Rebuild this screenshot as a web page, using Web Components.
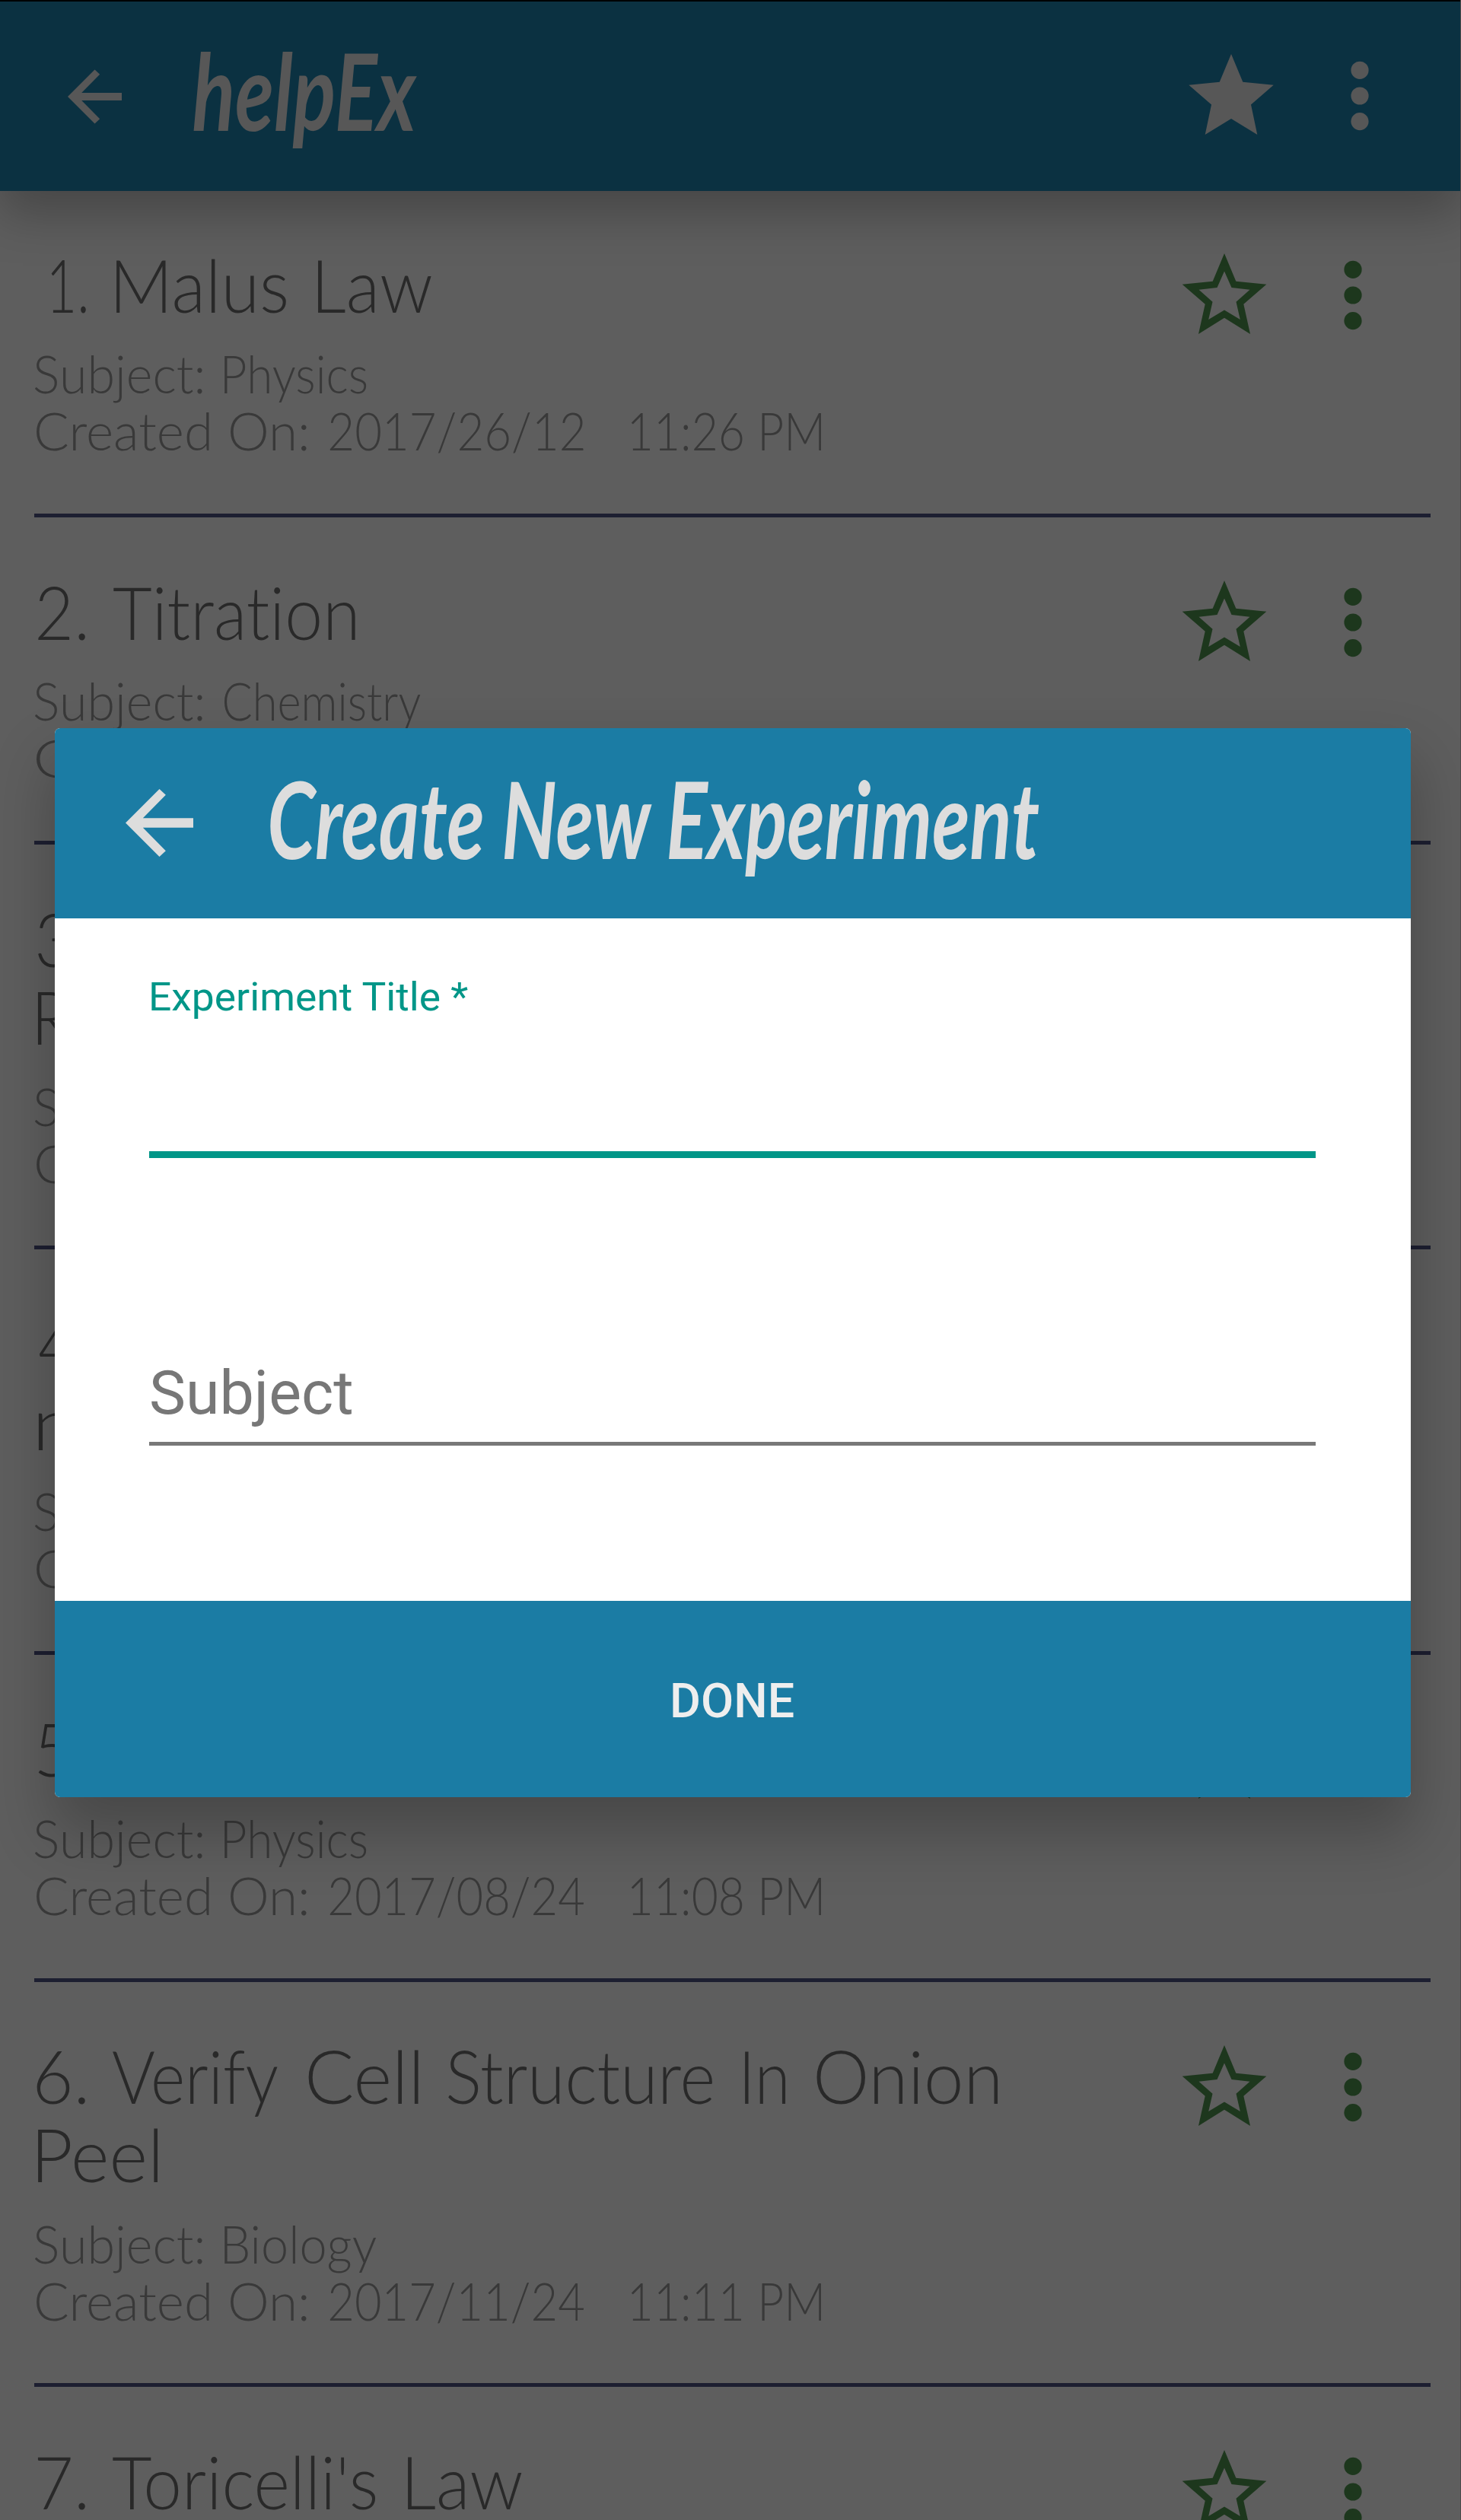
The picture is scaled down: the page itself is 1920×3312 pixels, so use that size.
<!DOCTYPE html>
<html lang="en">
<head>
<meta charset="utf-8">
<title>helpEx</title>
<style>
html,body{margin:0;padding:0}
body{width:1920px;height:3312px;overflow:hidden;background:#5e5e5e;font-family:Lato,"Liberation Sans",sans-serif}
</style>
</head>
<body>
<help-app></help-app>
<script>
const define=(name,html,setup)=>{
  const t=document.createElement('template');t.innerHTML=html;
  customElements.define(name,class extends HTMLElement{
    connectedCallback(){
      if(this.shadowRoot)return;
      this.attachShadow({mode:'open'}).append(t.content.cloneNode(true));
      if(setup)setup(this,this.shadowRoot);
    }
  });
};

/* One line of text whose ink is stretched to the width given in "w". */
define('fit-text',`<style>
:host{display:block;white-space:pre;flex:none}
span{display:block;width:max-content;transform-origin:0 50%;letter-spacing:.01px;font-variant-ligatures:none}
</style><span><slot></slot></span>`,(el,root)=>{
  const cs=getComputedStyle(el),ctx=document.createElement('canvas').getContext('2d');
  ctx.font=`${cs.fontStyle} ${cs.fontWeight} ${cs.fontSize} ${cs.fontFamily}`;
  ctx.letterSpacing='0.01px';
  const m=ctx.measureText(el.textContent),w=+el.getAttribute('w');
  const ink=m.actualBoundingBoxLeft+m.actualBoundingBoxRight,s=w/ink;
  el.style.width=w+'px';
  root.querySelector('span').style.transform=`translateX(${m.actualBoundingBoxLeft*s}px) scaleX(${s})`;
});

define('back-arrow',`<style>
:host{display:block;flex:none}svg{display:block;width:100%;height:100%}
</style><svg viewBox="4 4 16 16" fill="currentColor"><path d="M20 10.87H8.1l5.4-5.46L12 4l-8 8 8 8 1.5-1.41L8.1 13.13H20z"/></svg>`);

define('star-icon',`<style>
:host{display:block;width:112px;height:106px;flex:none}svg{display:block}
</style><svg width="112" height="106" viewBox="0 0 112 106" fill="currentColor" fill-rule="evenodd">
<path d="M56 0L71.3 36.7L111.3 40.7L81.3 66.7L90 106L56 84.7L22 106L30.7 66.7L.7 40.7L40.7 36.7ZM56 23.5L46.5 45L22.5 47.7L40.5 63.7L35.2 87L56 74.5L76.8 87L71.5 63.7L89.5 47.7L65.5 45Z"/>
</svg>`,(el,root)=>{
  if(el.hasAttribute('filled'))
    root.querySelector('path').setAttribute('d','M56 0L71.3 36.7L111.7 40.7L82 66.5L90.3 106L56 85L21.7 106L30 66.5L.3 40.7L40.7 36.7Z');
});

define('more-icon',`<style>:host{display:block;flex:none}svg{display:block}</style>
<svg width="24" height="92" viewBox="0 0 24 92" fill="currentColor"><circle cx="12" cy="12.3" r="11.6"/><circle cx="12" cy="46" r="11.6"/><circle cx="12" cy="79.6" r="11.6"/></svg>`);

define('app-bar',`<style>
:host{display:flex;align-items:center;box-sizing:border-box;height:251px;padding-left:89px;border-top:2px solid #000;
background:#0b3141;color:#575757;box-shadow:0 30px 60px rgba(0,0,0,.25);position:relative}
back-arrow{width:71px;height:72px}
.name{margin:0 0 0 94px;font-style:italic;font-weight:700;font-size:140px;line-height:160px;padding-bottom:18px}
.gap{flex:1}
star-icon{margin-bottom:6px}
more-icon{margin:0 121px 2px 101px}
</style><back-arrow></back-arrow><div class="name"><fit-text w="294">helpEx</fit-text></div><div class="gap"></div><star-icon filled></star-icon><more-icon></more-icon>`);

define('experiment-row',`<style>
:host{display:flex;box-sizing:border-box;margin:0 40px 0 45px;border-bottom:5px solid #1d1f31;padding:72.6px 0 71.9px;color:#292929;font-weight:300}
.text{flex:1}
.line{display:flex}
.title{font-size:96px;line-height:102.6px}
.title .line{height:102.6px}
.meta{margin-top:28px;font-size:69px;line-height:75px;color:#393939}
.meta .line{height:75px}
.meta .line+.line{height:74.8px}
.actions{display:flex;padding-top:10.5px;color:#1d371d;align-items:flex-start}
more-icon{margin:9px 90px 0 101px}
</style><div class="text"><div class="title"></div><div class="meta"></div></div><div class="actions"><star-icon></star-icon><more-icon></more-icon></div>`,(el,root)=>{
  const put=(sel,lines)=>lines.forEach(parts=>{
    const line=document.createElement('div');line.className='line';
    root.querySelector(sel).append(line);
    let end=45;
    for(const [from,to,s] of parts){
      const f=document.createElement('fit-text');
      f.setAttribute('w',to-from);f.style.marginLeft=(from-end)+'px';f.textContent=s;
      line.append(f);end=to;
    }
  });
  put('.title',el.data.title);put('.meta',el.data.meta);
});

define('text-field',`<style>
:host{display:flex;flex-direction:column;font-family:Roboto,sans-serif}
.line{background:var(--line);height:var(--h)}
.label{display:flex;padding-left:3.4px}
</style><div class="label"><slot></slot></div><div class="line"></div>`);

define('create-dialog',`<style>
:host{display:flex;flex-direction:column;position:absolute;left:71.6px;top:957px;width:1782.4px;height:1404.8px;border-radius:7px;background:#fff;overflow:hidden;
box-shadow:0 44px 80px 4px rgba(0,0,0,.24)}
header{display:flex;align-items:center;height:249.5px;background:#1b7ca4;color:#ddd;padding-left:93px}
back-arrow{width:89px;height:89px}
.name{margin-left:101px;font-style:italic;font-weight:700;font-size:140px;line-height:160px;padding-bottom:14px}
main{flex:1;padding:0 124.5px 0 124.4px}
.a{--line:#009688;--h:9px;color:#009688;font-size:52px;line-height:60px;padding-top:74px}
.a fit-text{padding-bottom:172px}
.b{--line:#787878;--h:5px;color:#777;font-size:80px;line-height:94px;padding-top:262px}
.b fit-text{padding-bottom:17px}
footer{display:flex;align-items:center;justify-content:center;box-sizing:border-box;height:258.2px;padding:6px 0 0 1px;background:#1b7ca4;color:#eee;font:500 63px/74px Roboto,sans-serif}
</style>
<header><back-arrow></back-arrow><div class="name"><fit-text w="1012">Create New Experiment</fit-text></div></header>
<main><text-field class="a"><fit-text w="417">Experiment Title *</fit-text></text-field>
<text-field class="b"><fit-text w="263.5">Subject</fit-text></text-field></main>
<footer><fit-text w="158.5">DONE</fit-text></footer>`);

/* Each line is a list of [start, end, text] parts. */
const subject=(end,s)=>[[46,266,'Subject:'],[295,end,s]];
const created=(date,time)=>[[48,403,'Created On:'],[433,767,date],[830,1079.5,time]];
const rows=[
 {title:[[[67,113,'1.'],[152.5,376,'Malus'],[418,566.5,'Law']]],meta:[subject(482,'Physics'),created('2017/26/12','11:26 PM')]},
 {title:[[[50,112,'2.'],[149,467,'Titration']]],meta:[subject(552.7,'Chemistry'),[[48,328,'Created']]]},
 {title:[[[50,112,'3.']],[[50,92,'R']]],meta:[[[46,266,'Subject:']],[[48,280,'Created']]]},
 {title:[[[51,112,'4.']],[[50,94,'n']]],meta:[[[46,266,'Subject:']],[[48,280,'Created']]]},
 {title:[[[50,112,'5.']]],meta:[subject(482,'Physics'),created('2017/08/24','11:08 PM')]},
 {title:[[[48,112,'6.'],[148,365,'Verify'],[404.5,549,'Cell'],[589.3,936.6,'Structure'],[978.6,1032,'In'],[1073,1311.6,'Onion']],[[50,207,'Peel']]],
  meta:[subject(494.6,'Biology'),created('2017/11/24','11:11 PM')]},
 {title:[[[50,112,'7.'],[148,493.7,"Toricelli's"],[535.7,685,'Law']]],meta:[]}
];
define('help-app',`<style>
:host{display:block;position:relative;width:1920px;height:3312px;overflow:hidden;box-sizing:border-box;border-right:1px solid #4c4c4c}
app-bar,.list{margin-right:-1px}
.list{margin-top:-.8px}
</style><app-bar></app-bar><div class="list"></div><create-dialog></create-dialog>`,(el,root)=>{
  for(const r of rows){const n=document.createElement('experiment-row');n.data=r;root.querySelector('.list').append(n);}
});
</script>
</body>
</html>
